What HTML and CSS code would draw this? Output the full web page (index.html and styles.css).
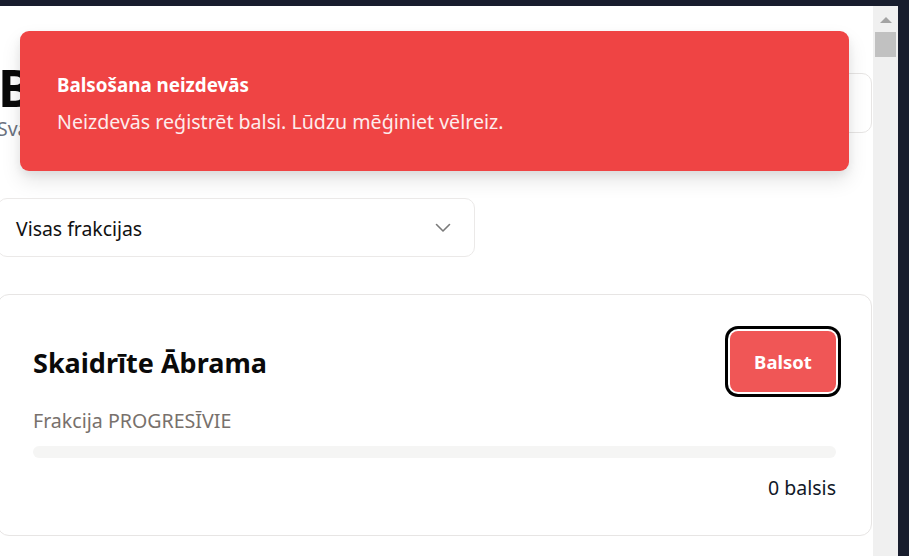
FILE: index.html
```html
<!DOCTYPE html>
<html lang="lv">
<head>
<meta charset="utf-8">
<title>Balsošana</title>
<link rel="stylesheet" href="styles.css">
</head>
<body>
<div class="screen">
  <div class="viewport">
    <main class="page">
      <header class="page-head">
        <div class="titles">
          <h1 class="page-title">Balsošana</h1>
          <p class="page-sub">Svarīgi: katrs lietotājs var balsot vienu reizi.</p>
        </div>
        <div class="head-box"></div>
      </header>

      <div class="select">
        <span class="select-label">Visas frakcijas</span>
        <svg class="chevron" width="16" height="10" viewBox="0 0 16 10" fill="none" stroke="#7a7a7a" stroke-width="1.6" stroke-linecap="round" stroke-linejoin="round"><path d="M1.5 1.5 8 8l6.5-6.5"/></svg>
      </div>

      <section class="card">
        <div class="card-row">
          <h2 class="cand-name">Skaidrīte Ābrama</h2>
          <button class="vote-btn">Balsot</button>
        </div>
        <p class="cand-party">Frakcija PROGRESĪVIE</p>
        <div class="bar"><div class="bar-fill" style="width:0%"></div></div>
        <p class="cand-votes">0 balsis</p>
      </section>
    </main>
  </div>
  <div class="scrollbar">
    <span class="sb-arrow"></span>
    <span class="sb-thumb"></span>
  </div>
</div>

<div class="toast" role="alert">
  <div class="toast-title">Balsošana neizdevās</div>
  <div class="toast-desc">Neizdevās reģistrēt balsi. Lūdzu mēģiniet vēlreiz.</div>
</div>
</body>
</html>
```

FILE: styles.css
```css
* { box-sizing: border-box; }
html, body { margin: 0; padding: 0; }
body {
  width: 909px;
  height: 556px;
  overflow: hidden;
  background: #181d2d;
  font-family: "Noto Sans", "Open Sans", sans-serif;
  color: #111;
}
.screen {
  display: flex;
  padding-top: 6px;
  height: 556px;
}
.viewport {
  width: 873px;
  height: 550px;
  background: #fff;
  overflow: hidden;
}
.scrollbar {
  width: 25px;
  height: 550px;
  background: #f0f0f0;
  display: flex;
  flex-direction: column;
  align-items: center;
  padding-top: 11px;
}
.sb-arrow {
  width: 0; height: 0;
  border-left: 6px solid transparent;
  border-right: 6px solid transparent;
  border-bottom: 6px solid #a3a3a3;
}
.sb-thumb {
  margin-top: 9px;
  width: 21px;
  height: 25px;
  background: #c1c1c1;
}
.page {
  margin-left: -3px;
  width: 875px;
  padding-top: 55px;
}
.page-head {
  display: flex;
  justify-content: space-between;
  align-items: flex-start;
}
.page-title {
  margin: 0;
  font-size: 52px;
  line-height: 52px;
  font-weight: 700;
  color: #0a0a0a;
  padding-left: 1px;
}
.page-sub {
  margin: 2px 0 0;
  font-size: 19.5px;
  line-height: 28px;
  color: #6b7280;
}
.head-box {
  margin-top: 12px;
  width: 200px;
  height: 60px;
  border: 1px solid #e7e5e4;
  border-radius: 10px;
}
.select {
  margin-top: 55px;
  width: 478px;
  height: 59px;
  border: 1px solid #ebe9e8;
  border-radius: 10px;
  display: flex;
  align-items: center;
  justify-content: space-between;
  padding: 3px 23px 0 18px;
}
.select-label {
  font-size: 19.4px;
  line-height: 30px;
  color: #111;
}
.chevron { margin-top: -2px; }
.card {
  margin-top: 37px;
  border: 1px solid #e7e5e4;
  border-radius: 12px;
  padding: 35px;
  height: 242px;
}
.card-row {
  display: flex;
  justify-content: space-between;
  align-items: center;
  height: 61px;
}
.cand-name {
  margin: 4px 0 0;
  font-size: 27px;
  line-height: 36px;
  font-weight: 700;
  color: #0a0a0a;
}
.vote-btn {
  margin-top: 1px;
  font-family: inherit;
  width: 106px;
  height: 61px;
  border: 0;
  border-radius: 8px;
  background: #f05656;
  color: #fff;
  font-size: 18.5px;
  font-weight: 700;
  box-shadow: 0 0 0 2px #fff, 0 0 0 5px #000;
}
.cand-party {
  margin: 16px 0 0;
  font-size: 19.6px;
  line-height: 28px;
  color: #78716c;
}
.bar {
  margin-top: 11px;
  height: 12px;
  border-radius: 6px;
  background: #f5f5f4;
  overflow: hidden;
}
.bar-fill { height: 100%; background: #ef4444; }
.cand-votes {
  margin: 16px 0 0;
  text-align: right;
  font-size: 19.5px;
  line-height: 28px;
  color: #111827;
}
.toast {
  position: absolute;
  left: 20px;
  top: 31px;
  width: 829px;
  height: 140px;
  background: #ef4444;
  border-radius: 9px;
  padding: 40px 37px 0;
  color: #fff;
  box-shadow: 0 10px 20px rgba(0,0,0,0.1), 0 4px 8px rgba(0,0,0,0.06);
}
.toast-title {
  font-size: 18.8px;
  line-height: 28px;
  font-weight: 700;
}
.toast-desc {
  margin-top: 9px;
  font-size: 19.6px;
  line-height: 28px;
  opacity: 0.9;
}
```
